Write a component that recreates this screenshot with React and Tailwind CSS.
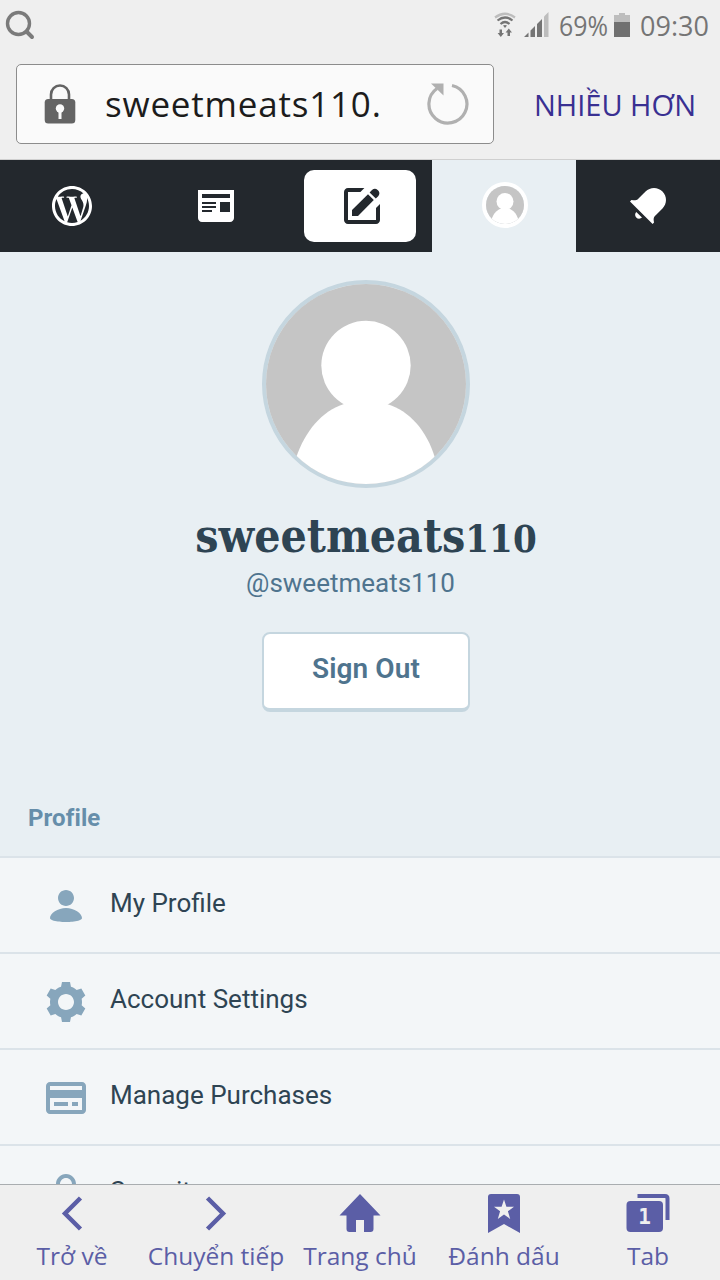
import React from 'react';

const icons = {
  wordpress:
    'M12 2C6.477 2 2 6.477 2 12s4.477 10 10 10 10-4.477 10-10S17.523 2 12 2zM3.5 12c0-1.232.264-2.402.736-3.46L8.29 19.65C5.456 18.272 3.5 15.365 3.5 12zm8.5 8.5c-.834 0-1.64-.12-2.4-.345l2.55-7.41 2.613 7.157c.017.042.038.08.06.117-.884.31-1.833.48-2.823.48zm1.172-12.485c.512-.027.973-.08.973-.08.458-.055.404-.728-.054-.702 0 0-1.376.108-2.265.108-.835 0-2.24-.107-2.24-.107-.458-.026-.51.674-.053.7 0 0 .434.055.892.082l1.324 3.63-1.86 5.578-3.096-9.208c.512-.027.973-.08.973-.08.458-.055.403-.728-.055-.702 0 0-1.376.108-2.265.108-.16 0-.347-.003-.547-.01C6.418 5.025 9.03 3.5 12 3.5c2.213 0 4.228.846 5.74 2.232-.037-.002-.072-.007-.11-.007-.835 0-1.427.727-1.427 1.51 0 .7.404 1.292.835 1.993.323.566.7 1.293.7 2.344 0 .727-.28 1.572-.646 2.748l-.848 2.833-3.072-9.138zm3.1 11.332l2.597-7.506c.484-1.212.645-2.18.645-3.044 0-.313-.02-.603-.057-.874.664 1.21 1.042 2.6 1.042 4.078 0 3.136-1.7 5.874-4.227 7.347z',
  reader:
    'M3 4v14c0 1.1.9 2 2 2h14c1.1 0 2-.9 2-2V4H3zm7 11H5v-1h5v1zm2-2H5v-1h7v1zm0-2H5v-1h7v1zm7 4h-5v-5h5v5zm0-7H5V6h14v2z',
  create:
    'M21 11v8c0 1.105-.895 2-2 2H5c-1.105 0-2-.895-2-2V5c0-1.105.895-2 2-2h8.200l-2 2H5v14h14v-6l2-2zM7 17v-3l8-7.900 2.900 2.900L10 17H7zM15.800 5.200l1.200-1.200c.9-.8 2-.8 2.800 0l.3.3c.8.8.8 2 0 2.800l-1.200 1.200-3.100-3.100z',
  bell: 'M6.14 14.97l2.828 2.827c-.362.362-.862.586-1.414.586-1.105 0-2-.895-2-2 0-.552.224-1.052.586-1.414zm8.867 5.324L14.3 21 3 9.7l.706-.707 1.102.157c.754.108 1.69-.122 2.077-.51l3.885-3.884c2.34-2.34 6.135-2.34 8.475 0s2.34 6.135 0 8.475l-3.885 3.886c-.388.388-.618 1.323-.51 2.077l.157 1.1z',
  user: 'M12 4c2.21 0 4 1.79 4 4s-1.79 4-4 4-4-1.79-4-4 1.79-4 4-4zm0 16s8 0 8-2c0-2.4-3.9-5-8-5s-8 2.6-8 5c0 2 8 2 8 2z',
  cog: 'M20 12c0-.568-.06-1.122-.174-1.656l1.834-1.612-2-3.464-2.322.786c-.82-.736-1.787-1.308-2.86-1.657L14 2h-4l-.48 2.396c-1.07.35-2.04.92-2.858 1.657L4.34 5.268l-2 3.464 1.834 1.612C4.06 10.878 4 11.432 4 12s.06 1.122.174 1.656L2.34 15.268l2 3.464 2.322-.786c.82.736 1.787 1.308 2.86 1.657L10 22h4l.48-2.396c1.07-.35 2.038-.92 2.858-1.657l2.322.786 2-3.464-1.834-1.613c.113-.535.174-1.09.174-1.656zm-8 4c-2.21 0-4-1.79-4-4s1.79-4 4-4 4 1.79 4 4-1.79 4-4 4z',
  card: 'M20 4H4c-1.105 0-2 .895-2 2v12c0 1.105.895 2 2 2h16c1.105 0 2-.895 2-2V6c0-1.105-.895-2-2-2zm0 2v2H4V6h16zM4 18v-6h16v6H4zm2-4h7v2H6v-2zm9 0h3v2h-3v-2z',
  lock: 'M18 8h-1V7c0-2.757-2.243-5-5-5S7 4.243 7 7v1H6c-1.105 0-2 .895-2 2v10c0 1.105.895 2 2 2h12c1.105 0 2-.895 2-2V10c0-1.105-.895-2-2-2zM9 7c0-1.654 1.346-3 3-3s3 1.346 3 3v1H9V7z',
};

const Icon = ({ name, className }) => (
  <svg
    viewBox="0 0 24 24"
    fill="currentColor"
    fillRule="evenodd"
    className={`size-12 shrink-0 ${className || ''}`}
  >
    <path d={icons[name]} />
  </svg>
);

const Avatar = ({ className }) => (
  <svg viewBox="0 0 200 200" className={`rounded-full ${className}`}>
    <rect width="200" height="200" fill="#c5c5c5" />
    <circle cx="100" cy="81.500" r="44.700" fill="#fff" />
    <path
      d="M78 120 C56 127 39 147 30 174 V200 H169 V174 C161 147 144 127 121 120 Z"
      fill="#fff"
    />
  </svg>
);

const StatusBar = () => (
  <div className="flex h-16 shrink-0 items-start justify-between pl-1 pr-2.5 text-[#757575]">
    <svg viewBox="0 0 36 36" className="mt-2 size-9" fill="none">
      <circle cx="14.500" cy="15.500" r="11" stroke="#7b7b7b" strokeWidth="3.400" />
      <path d="M22.500 23.500 L28 29" stroke="#7b7b7b" strokeWidth="4" strokeLinecap="round" />
    </svg>
    <div className="flex items-start pt-2.5">
      <svg viewBox="0 0 22 26" className="mr-2 mt-0.5 h-[26px] w-[22px]" fill="none">
        <path d="M1 5.500 Q11 -2 21 5.500" stroke="#bdbdbd" strokeWidth="2.200" />
        <path d="M3.500 8.500 Q11 2.500 18.500 8.500 M6.500 12 Q11 8 15.500 12" stroke="#757575" strokeWidth="2.200" />
        <path
          d="M9 13.500 Q11 12.500 13 13.500 L11 16 Z M5.500 17.500 h2.500 v3.500 h2 l-3.200 4 l-3.200 -4 h1.900 Z M13.500 24 h2.500 v-3.500 h2 l-3.200 -4 l-3.200 4 h1.900 Z"
          fill="#757575"
        />
      </svg>
      <svg viewBox="0 0 25 25" className="mr-2.5 mt-0.5 size-[25px]">
        <path d="M20 4.500 L24.500 0 V25 H20 Z" fill="#bdbdbd" />
        <path d="M0 25 L4.500 20.500 V25 Z M6.500 18.500 L11 14 V25 H6.500 Z M13 12 L18 7 V25 H13 Z" fill="#757575" />
      </svg>
      <span className="w-[51px] origin-left scale-x-[0.92] whitespace-nowrap font-['Open_Sans',sans-serif] text-[27px] leading-8">
        69%
      </span>
      <svg viewBox="0 0 16 24" className="ml-1 mt-[3px] h-6 w-4">
        <path d="M0 2 H5 V0 H11 V2 H16 V9 H0 Z" fill="#bdbdbd" />
        <path d="M0 9 H16 V24 H0 Z" fill="#707070" />
      </svg>
      <span className="ml-2.5 w-[70px] whitespace-nowrap font-['Open_Sans',sans-serif] text-[27px] leading-8">
        09:30
      </span>
    </div>
  </div>
);

const AddressBar = () => (
  <div className="flex h-24 shrink-0 items-start border-b border-[#cfcfcf] pl-4">
    <div className="flex h-20 w-[478px] items-center rounded-[5px] border border-[#8c8c8c] bg-[#fafafa] pl-[27px]">
      <svg viewBox="0 0 32 40" className="h-10 w-8">
        <path d="M7 17 V10.500 a9 9 0 0 1 18 0 V17" fill="none" stroke="#646464" strokeWidth="2.600" />
        <rect x="0.700" y="15" width="30.600" height="24.500" rx="3.500" fill="#646464" />
        <circle cx="16" cy="24.500" r="4.200" fill="#fafafa" />
        <path d="M14.500 26 h3 v9 h-3 Z" fill="#fafafa" />
      </svg>
      <div className="ml-[29px] w-[277px] whitespace-nowrap font-['Open_Sans',sans-serif] text-[35px] leading-[46px] tracking-[0.8px] text-[#1c1c1c]">
        sweetmeats110.
      </div>
      <svg viewBox="0 0 44 44" className="ml-[44px] size-11" fill="none">
        <path d="M26 3.500 A19 19 0 1 1 11 6.500" stroke="#b0b0b0" strokeWidth="3.200" />
        <path d="M5 1.500 H17.500 V13.500 Z" fill="#b0b0b0" />
      </svg>
    </div>
    <div className="ml-10 mt-5 whitespace-nowrap font-['Open_Sans',sans-serif] text-[29px] leading-[42px] text-[#393092]">
      NHIỀU HƠN
    </div>
  </div>
);

const MasterBar = () => (
  <nav className="grid h-[92px] shrink-0 grid-cols-5 bg-[#23282d] text-white">
    <div className="flex items-center justify-center">
      <Icon name="wordpress" />
    </div>
    <div className="flex items-center justify-center">
      <Icon name="reader" />
    </div>
    <div className="flex items-center justify-center">
      <div className="flex h-18 w-28 items-center justify-center rounded-[10px] bg-white text-[#23282d]">
        <Icon name="create" className="ml-1" />
      </div>
    </div>
    <div className="flex items-center justify-center bg-[#e8eff3]">
      <Avatar className="mb-0.5 ml-0.5 size-[46px] border-4 border-white" />
    </div>
    <div className="flex items-center justify-center">
      <Icon name="bell" />
    </div>
  </nav>
);

const ProfileHeader = () => (
  <div className="flex h-[604px] shrink-0 flex-col items-center pl-3 pt-7">
    <Avatar className="size-52 border-4 border-[#c5d6df]" />
    <h1 className="mt-3 whitespace-nowrap font-['DejaVu_Serif_Condensed','DejaVu_Serif',serif] text-[46px] font-bold leading-[72px] text-[#2e4453]">
      sweetmeats<span className="text-[38px]">110</span>
    </h1>
    <p className="mr-[31px] -mt-2.5 font-['Roboto',sans-serif] text-[26px] leading-9 text-[#4f748e]">
      @sweetmeats110
    </p>
    <button className="mt-[31px] h-20 w-52 rounded-lg border-2 border-b-4 border-[#c5d6df] bg-white pb-1 font-['Roboto',sans-serif] text-[28px] font-semibold tracking-[0.1px] text-[#4f748e]">
      Sign Out
    </button>
    <h2 className="mt-[90px] w-full pl-4 font-['Roboto',sans-serif] text-[24px] font-bold leading-8 tracking-[0.1px] text-[#668eaa]">
      Profile
    </h2>
  </div>
);

const menuItems = [
  { icon: 'user', label: 'My Profile' },
  { icon: 'cog', label: 'Account Settings' },
  { icon: 'card', label: 'Manage Purchases' },
  { icon: 'lock', label: 'Security' },
];

const ProfileMenu = () => (
  <ul className="min-h-0 flex-1 overflow-hidden bg-[#f3f6f8]">
    {menuItems.map((item) => (
      <li
        key={item.label}
        className="flex h-24 items-center gap-5 border-t-2 border-[#dbe3e9] pl-[42px] font-['Roboto',sans-serif] text-[26px] text-[#2e4453]"
      >
        <Icon name={item.icon} className="mt-0.5 text-[#87a6bc]" />
        <span className="pb-1">{item.label}</span>
      </li>
    ))}
  </ul>
);

const toolbarItems = [
  {
    label: 'Trở về',
    icon: <path d="M30.500 5 L15 20.500 L30.500 36" fill="none" stroke="currentColor" strokeWidth="4.500" />,
  },
  {
    label: 'Chuyển tiếp',
    icon: <path d="M13.500 5 L29 20.500 L13.500 36" fill="none" stroke="currentColor" strokeWidth="4.500" />,
  },
  {
    label: 'Trang chủ',
    icon: (
      <path d="M22 1 L42.500 22.500 H35.500 V36 Q35.500 39 32.500 39 H26 V27 H18 V39 H11.500 Q8.500 39 8.500 36 V22.500 H1.500 Z" />
    ),
  },
  {
    label: 'Đánh dấu',
    icon: (
      <path
        fillRule="evenodd"
        d="M9 1 H35 Q38 1 38 4 V40 L22 31 L6 40 V4 Q6 1 9 1 Z M22 6.500 L19.600 13.700 H12 L18.100 18.200 L15.800 26 L22 21.500 L28.200 26 L25.900 18.200 L32 13.700 H24.400 Z"
      />
    ),
  },
  {
    label: 'Tab',
    icon: (
      <>
        <rect x="0.500" y="8" width="36.500" height="31" rx="4" />
        <path d="M11.500 3 H39 Q41.500 3 41.500 5.500 V27" fill="none" stroke="currentColor" strokeWidth="4" />
        <text x="18.500" y="31" textAnchor="middle" fill="#efefef" fontSize="21" fontWeight="700" fontFamily="DejaVu Sans Mono">
          1
        </text>
      </>
    ),
  },
];

const Toolbar = () => (
  <div className="grid h-24 shrink-0 grid-cols-5 border-t border-[#a9adb0] bg-[#efefef] text-[#5b5ea6]">
    {toolbarItems.map((item) => (
      <div key={item.label} className="flex flex-col items-center pt-2">
        <svg viewBox="0 0 44 44" fill="currentColor" className="size-11">
          {item.icon}
        </svg>
        <span className="-mt-px whitespace-nowrap font-['Open_Sans',sans-serif] text-[24.5px] leading-10">
          {item.label}
        </span>
      </div>
    ))}
  </div>
);

const App = () => {
  return (
    <div className="flex h-[1280px] w-[720px] flex-col overflow-hidden bg-[#efefef]">
      <StatusBar />
      <AddressBar />
      <MasterBar />
      <main className="flex min-h-0 flex-1 flex-col bg-[#e8eff3]">
        <ProfileHeader />
        <ProfileMenu />
      </main>
      <Toolbar />
    </div>
  );
};

export default App;
